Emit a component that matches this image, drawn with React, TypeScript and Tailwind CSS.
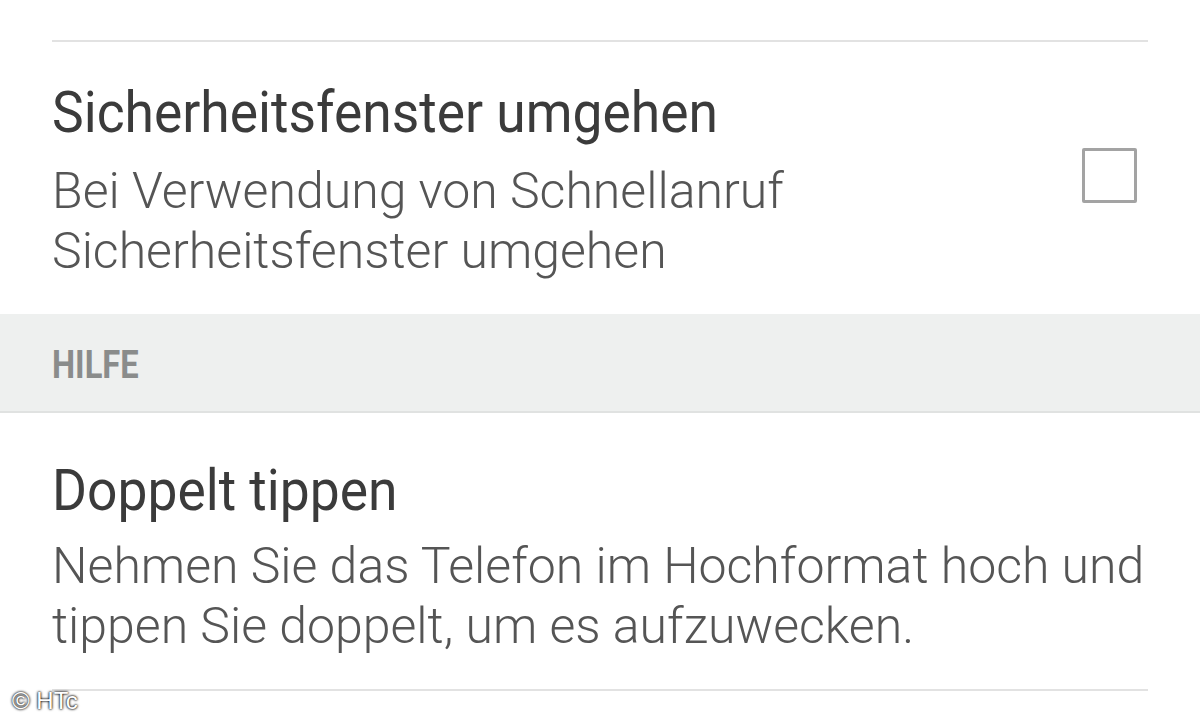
const titleFont = { fontFamily: "Roboto, 'Liberation Sans', sans-serif" }

function Title({ children }: { children: React.ReactNode }) {
  return (
    <div
      style={titleFont}
      className="h-[64px] text-[58px] leading-[64px] text-[#3b3b3b] whitespace-nowrap origin-left scale-x-[0.92]"
    >
      {children}
    </div>
  )
}

function Summary({ children }: { children: React.ReactNode }) {
  return (
    <div
      style={titleFont}
      className="text-[50px] leading-[60px] font-light text-[#555555] whitespace-nowrap"
    >
      {children}
    </div>
  )
}

export default function App() {
  return (
    <div className="relative w-[1200px] h-[720px] overflow-hidden bg-white">
      <div className="px-[52px]">
        <div className="h-[40px]" />
        <div className="h-[2px] bg-[#e2e2e2]" />

        {/* Sicherheitsfenster */}
        <div className="flex items-start justify-between pt-[38px] pb-[33px]">
          <div>
            <Title>Sicherheitsfenster umgehen</Title>
            <div className="mt-[17px]">
              <Summary>
                Bei Verwendung von Schnellanruf
                <br />
                Sicherheitsfenster umgehen
              </Summary>
            </div>
          </div>
          <div className="mt-[68px] mr-[11px] w-[55px] h-[55px] border-[3px] border-[#a3a3a3] rounded-[2px]" />
        </div>
      </div>

      {/* Section header */}
      <div className="h-[99px] bg-[#eef0ef] border-b-2 border-[#e0e2e1] flex items-center pt-[5px] px-[52px]">
        <span
          style={titleFont}
          className="text-[38px] font-bold text-[#8a8c8b] origin-left scale-x-[0.86] inline-block"
        >
          HILFE
        </span>
      </div>

      <div className="px-[52px]">
        {/* Doppelt tippen */}
        <div className="pt-[45px] pb-[33px]">
          <Title>Doppelt tippen</Title>
          <div className="mt-[14px]">
            <Summary>
              Nehmen Sie das Telefon im Hochformat hoch und
              <br />
              tippen Sie doppelt, um es aufzuwecken.
            </Summary>
          </div>
        </div>
        <div className="h-[2px] bg-[#e2e2e2]" />
      </div>

      <div
        style={{ fontFamily: "'Liberation Sans', Arial, sans-serif", textShadow: "0 0 3px #000, 0 0 2px #000" }}
        className="absolute left-[12px] top-[683px] text-[24px] text-white"
      >
        © HTc
      </div>
    </div>
  )
}
